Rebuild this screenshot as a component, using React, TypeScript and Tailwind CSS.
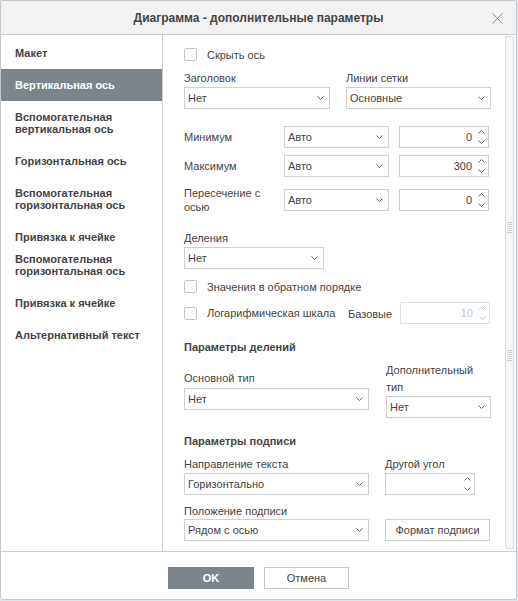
import React from "react";

const font = "font-['Liberation_Sans',Arial,sans-serif]";

function Chevron({ up }: { up?: boolean }) {
  return (
    <svg width="7" height="4" viewBox="0 0 7 4" className="block">
      <path
        d={up ? "M0.5 3.5 L3.5 0.5 L6.5 3.5" : "M0.5 0.5 L3.5 3.5 L6.5 0.5"}
        stroke="#666"
        strokeWidth="1"
        fill="none"
      />
    </svg>
  );
}

function Select({ value, width }: { value: string; width: string }) {
  return (
    <div
      className={`flex h-[22px] items-center justify-between border border-[#cfcfcf] bg-white pl-[3px] pr-[5px] text-[11px] text-[#444] ${width}`}
    >
      <span>{value}</span>
      <Chevron />
    </div>
  );
}

function Spin({ value, width, disabled }: { value?: string; width: string; disabled?: boolean }) {
  return (
    <div
      className={`flex h-[22px] items-center border bg-white text-[11px] ${width} ${
        disabled ? "border-[#e2e2e2] text-[#c4c4c4]" : "border-[#cfcfcf] text-[#444]"
      }`}
    >
      <span className="flex-1 text-right">{value}</span>
      <div className={`ml-[6px] mr-[3px] flex flex-col items-center gap-[6px] ${disabled ? "opacity-40" : ""}`}>
        <Chevron up />
        <Chevron />
      </div>
    </div>
  );
}

function Check({ label }: { label: string }) {
  return (
    <div className="flex h-[13px] items-center">
      <span className="h-[13px] w-[13px] shrink-0 rounded-[2px] border border-[#c4c4c4] bg-white" />
      <span className="ml-[10px] whitespace-nowrap text-[11px] leading-[14px] text-[#444]">{label}</span>
    </div>
  );
}

function Grip() {
  return (
    <div className="flex flex-col items-center gap-[1px]">
      {[0, 1, 2, 3, 4, 5].map((i) => (
        <span key={i} className="h-[1px] w-[5px] bg-[#cfcfcf]" />
      ))}
    </div>
  );
}

const menu: { text: React.ReactNode; active?: boolean; overlap?: boolean }[] = [
  { text: "Макет" },
  { text: "Вертикальная ось", active: true },
  { text: <>Вспомогательная<br />вертикальная ось</> },
  { text: "Горизонтальная ось" },
  { text: <>Вспомогательная<br />горизонтальная ось</> },
  { text: "Привязка к ячейке" },
  { text: <>Вспомогательная<br />горизонтальная ось</>, overlap: true },
  { text: "Привязка к ячейке" },
  { text: "Альтернативный текст" },
];

export default function App() {
  return (
    <div className={`h-[601px] w-[518px] bg-[#dfe4e9] ${font}`}>
      <div className="flex h-[600px] w-[517px] flex-col overflow-hidden rounded-[3px] border border-[#c3c8cd] bg-white">
        <header className="relative flex h-[34px] shrink-0 items-center justify-center border-b border-[#cdcdcd] bg-[#f2f2f2]">
          <span className="text-[12px] font-bold text-[#444]">Диаграмма - дополнительные параметры</span>
          <svg width="11" height="11" viewBox="0 0 11 11" className="absolute right-[13px] top-[12px]">
            <path d="M0.5 0.5 L10.5 10.5 M10.5 0.5 L0.5 10.5" stroke="#8a8a8a" strokeWidth="1" />
          </svg>
        </header>

        <div className="flex h-[517px] shrink-0 border-b border-[#cdcdcd]">
          <nav className="w-[162px] shrink-0 border-r border-[#cdcdcd] pt-[2px]">
            {menu.map((item, i) => (
              <div
                key={i}
                className={`py-[10px] pl-[14px] text-[11px] font-bold leading-[12px] ${
                  item.active ? "bg-[#7d858c] text-white" : "text-[#444]"
                } ${item.overlap ? "mt-[-10px]" : ""}`}
              >
                {item.text}
              </div>
            ))}
          </nav>

          <section className="flex-1 pl-[21px] pt-[13px] text-[11px] leading-[14px] text-[#444]">
            <Check label="Скрыть ось" />

            <div className="mt-[10px] flex gap-[16px]">
              <div>
                <div>Заголовок</div>
                <div className="mt-[2px]">
                  <Select value="Нет" width="w-[146px]" />
                </div>
              </div>
              <div>
                <div>Линии сетки</div>
                <div className="mt-[2px]">
                  <Select value="Основные" width="w-[145px]" />
                </div>
              </div>
            </div>

            <div className="mt-[17px] flex h-[22px] items-center">
              <div className="w-[100px]">Минимум</div>
              <Select value="Авто" width="w-[105px]" />
              <div className="ml-[10px]">
                <Spin value="0" width="w-[90px]" />
              </div>
            </div>
            <div className="mt-[7px] flex h-[22px] items-center">
              <div className="w-[100px]">Максимум</div>
              <Select value="Авто" width="w-[105px]" />
              <div className="ml-[10px]">
                <Spin value="300" width="w-[90px]" />
              </div>
            </div>
            <div className="mt-[9px] flex h-[28px] items-center">
              <div className="w-[100px]">
                Пересечение с<br />осью
              </div>
              <Select value="Авто" width="w-[105px]" />
              <div className="ml-[10px]">
                <Spin value="0" width="w-[90px]" />
              </div>
            </div>

            <div className="mt-[17px]">Деления</div>
            <div className="mt-[2px]">
              <Select value="Нет" width="w-[140px]" />
            </div>

            <div className="mt-[11px]">
              <Check label="Значения в обратном порядке" />
            </div>
            <div className="mt-[9px] flex h-[22px] items-center">
              <div className="w-[164px]">
                <Check label="Логарифмическая шкала" />
              </div>
              <div className="w-[52px] pt-[2px]">Базовые</div>
              <Spin value="10" width="w-[90px]" disabled />
            </div>

            <div className="mt-[16px] font-bold">Параметры делений</div>
            <div className="mt-[8px] flex items-center gap-[17px]">
              <div className="w-[185px]">
                <div>Основной тип</div>
                <div className="mt-[3px]">
                  <Select value="Нет" width="w-[185px]" />
                </div>
              </div>
              <div className="w-[105px]">
                <div className="leading-[17px]">
                  Дополнительный
                  <br />
                  тип
                </div>
                <Select value="Нет" width="w-[105px]" />
              </div>
            </div>

            <div className="mt-[16px] font-bold">Параметры подписи</div>
            <div className="mt-[9px] flex gap-[16px]">
              <div className="w-[185px]">
                <div>Направление текста</div>
                <div className="mt-[2px]">
                  <Select value="Горизонтально" width="w-[185px]" />
                </div>
              </div>
              <div>
                <div>Другой угол</div>
                <div className="mt-[2px]">
                  <Spin width="w-[90px]" />
                </div>
              </div>
            </div>
            <div className="mt-[9px]">Положение подписи</div>
            <div className="mt-[1px] flex gap-[16px]">
              <Select value="Рядом с осью" width="w-[185px]" />
              <button className="flex h-[22px] w-[105px] items-center justify-center border border-[#cfcfcf] bg-white text-[11px] text-[#444]">
                Формат подписи
              </button>
            </div>
          </section>

          <div className="mb-[2px] mr-[2px] mt-[1px] flex w-[9px] shrink-0 flex-col items-center rounded-[2px] border border-[#dcdcdc] bg-[#f7f7f7]">
            <div className="mt-[185px]">
              <Grip />
            </div>
            <div className="mt-[117px]">
              <Grip />
            </div>
          </div>
        </div>

        <footer className="flex flex-1 justify-center gap-[10px] pt-[15px]">
          <button className="h-[22px] w-[86px] bg-[#7d858c] text-[11px] font-bold text-white">OK</button>
          <button className="h-[22px] w-[85px] border border-[#c8c8c8] bg-white text-[11px] text-[#444]">
            Отмена
          </button>
        </footer>
      </div>
    </div>
  );
}
